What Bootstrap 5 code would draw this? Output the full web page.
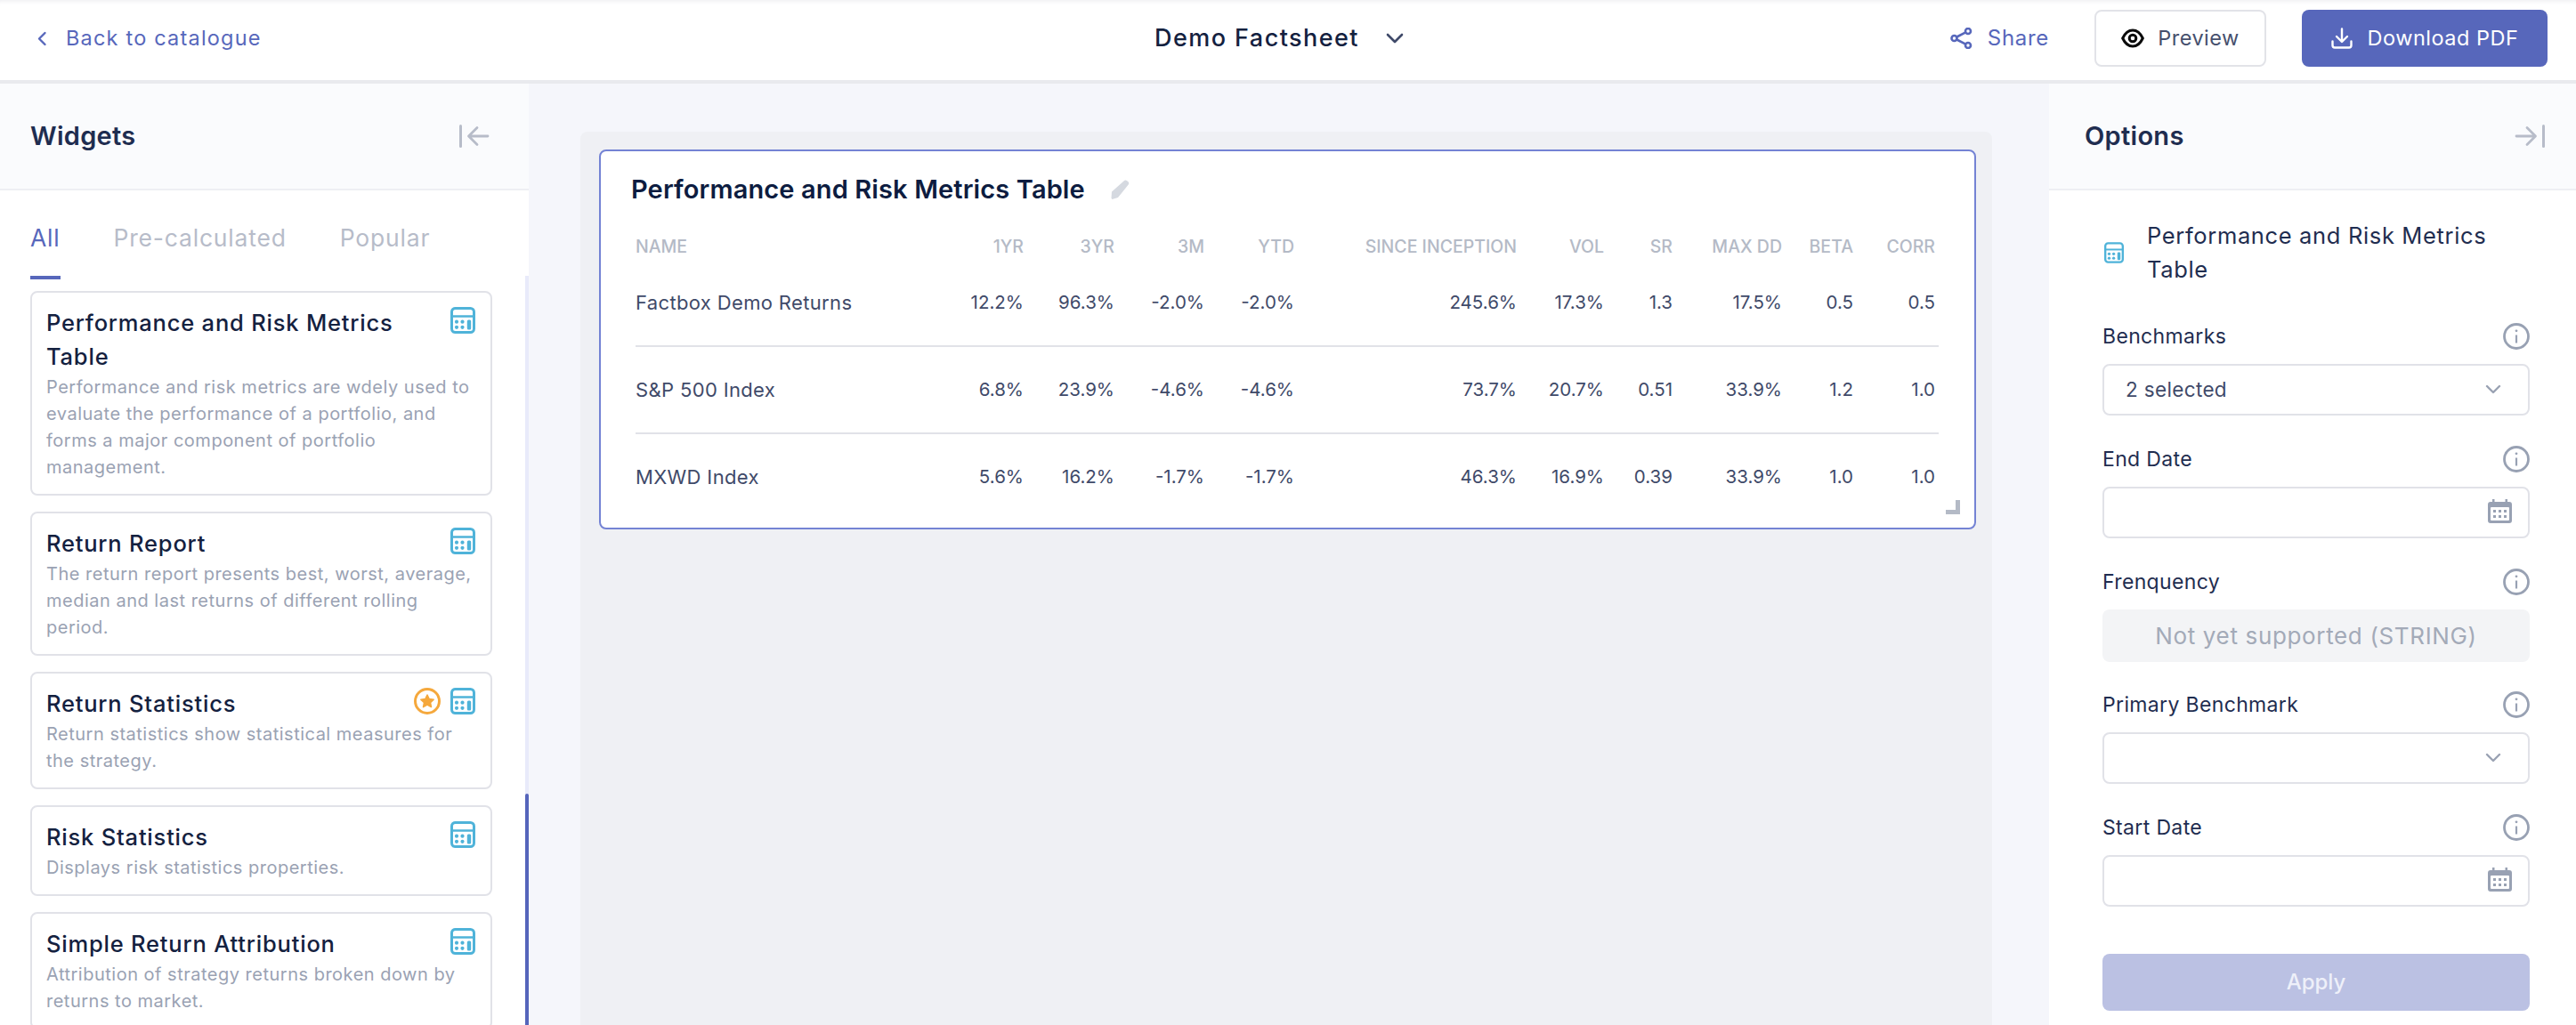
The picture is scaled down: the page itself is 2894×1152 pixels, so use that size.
<!DOCTYPE html>
<html lang="en">
<head>
    <meta charset="UTF-8">
    <meta name="viewport" content="width=device-width, initial-scale=1.0">
    <title>Demo Factsheet</title>
    <link href="https://cdn.jsdelivr.net/npm/bootstrap@5.3.0/dist/css/bootstrap.min.css" rel="stylesheet">
    <style>
        html, body { height: 100%; }
        body {
            font-family: Inter, "Noto Sans", sans-serif;
            background: #f5f6fb;
            color: #1f2d50;
            overflow: hidden;
        }
        .app-shell { height: 100vh; }

        /* top bar */
        .top-bar {
            height: 94px;
            padding: 0 32px 4px 0;
            background: #fff;
            border-bottom: 4px solid #e9eaee;
            box-shadow: inset 0 5px 4px -3px #f0f0f3;
            flex: none;
        }
        .top-left { width: 1297px; padding-left: 41px; }
        .back-link { color: #5767bb; font-size: 23.5px; letter-spacing: 1.2px; text-decoration: none; gap: 21px; }
        .sheet-title { color: #14213f; font-size: 27px; font-weight: 500; letter-spacing: 1.45px; gap: 30px; }
        .share-link { color: #5767bb; font-size: 24px; letter-spacing: .7px; text-decoration: none; gap: 17px; margin-right: 51px; }
        .top-btn {
            height: 64px;
            font-size: 23.5px;
            letter-spacing: .5px;
            border-radius: 8px;
            display: flex;
            align-items: center;
            justify-content: center;
        }
        .btn-preview { width: 193px; margin-right: 40px; background: #fff; border: 2px solid #e2e3e8; color: #46506d; gap: 15px; }
        .btn-download { width: 276px; background: #5767bb; border: 0; color: #fff; gap: 17px; }

        /* side panels */
        .side-left { width: 594px; background: #fff; flex: none; }
        .side-right { width: 592px; background: #fff; flex: none; }
        .panel-head {
            height: 120px;
            background: #fafbfd;
            border-bottom: 2px solid #eeeff3;
            flex: none;
        }
        .side-left .panel-head { padding: 0 44px 0 34px; }
        .side-right .panel-head { padding: 0 35px 0 40px; }
        .panel-title { color: #1f2d50; font-size: 29px; font-weight: 600; letter-spacing: .3px; margin: 0; }

        /* tabs */
        .tab-row { padding: 0 0 0 34px; gap: 60px; height: 100px; flex: none; }
        .tab-row .nav-link {
            padding: 0;
            height: 100px;
            line-height: 106px;
            font-size: 26.5px;
            letter-spacing: .8px;
            color: #b7bcc9;
        }
        .tab-row .nav-link.active { color: #5767bb; border-bottom: 4px solid #5767bb; }
        .widget-list { padding: 13px 41px 0 34px; overflow: hidden; gap: 18px; }
        .widget-item {
            border: 2px solid #e1e2e8;
            border-radius: 8px;
            padding: 15px 16px;
            flex: none;
        }
        .widget-item h3 {
            font-size: 25.5px;
            font-weight: 500;
            line-height: 38px;
            letter-spacing: .8px;
            color: #14213f;
            margin: 0;
        }
        .widget-item p {
            font-size: 20px;
            line-height: 30px;
            letter-spacing: .5px;
            color: #9aa2b3;
            margin: 0;
        }
        .item-icons { position: absolute; top: 16px; right: 17px; gap: 11px; }
        .has-icon h3 { padding-right: 42px; }
        .scroll-track { position: absolute; right: 0; top: 216px; bottom: 0; width: 4px; background: #e8eafa; }
        .scroll-thumb { position: absolute; left: 0; right: 0; top: 582px; bottom: 0; background: #5565bb; border-radius: 2px 2px 0 0; }

        /* canvas */
        .canvas-area { padding: 54px 64px 0 58px; }
        .canvas-sheet { background: #eff0f4; border-radius: 8px 8px 0 0; height: 100%; padding: 20px 18px 0 21px; }
        .metric-box {
            height: 427px;
            padding: 23px 24px 0 34px;
            background: #fff;
            border: 2px solid #7483d4;
            border-radius: 8px;
        }
        .metric-title { color: #0d1c40; font-size: 29px; font-weight: 600; letter-spacing: .12px; line-height: 40px; margin: 0; gap: 28px; }
        .metric-table { table-layout: fixed; width: 1464px; margin: 29px 0 0 5px; }
        .metric-table th, .metric-table td { padding: 0 4px 0 0; text-align: right; vertical-align: middle; border: 0; background: none; white-space: nowrap; }
        .metric-table th:first-child, .metric-table td:first-child { text-align: left; }
        .metric-table thead th { height: 31px; color: #b4bac6; font-size: 19.5px; font-weight: 500; }
        .metric-table tbody td { height: 98px; color: #3f4a69; font-size: 20.5px; }
        .metric-table tbody td:first-child { font-size: 22px; letter-spacing: .35px; }
        .metric-table tbody tr:first-child td { height: 96px; }
        .metric-table tbody tr + tr td { border-top: 2px solid #e1e2e8; }
        .metric-table col:nth-child(1) { width: 340px; }
        .metric-table col:nth-child(2) { width: 100px; }
        .metric-table col:nth-child(3) { width: 102px; }
        .metric-table col:nth-child(4), .metric-table col:nth-child(5) { width: 101px; }
        .metric-table col:nth-child(6) { width: 250px; }
        .metric-table col:nth-child(7) { width: 98px; }
        .metric-table col:nth-child(8) { width: 77px; }
        .metric-table col:nth-child(9) { width: 123px; }
        .metric-table col:nth-child(10) { width: 80px; }
        .metric-table col:nth-child(11) { width: 92px; }
        .resize-grip {
            position: absolute;
            right: 16px;
            bottom: 15px;
            width: 16px;
            height: 16px;
            border-right: 5px solid #b4bac6;
            border-bottom: 5px solid #b4bac6;
        }

        /* options */
        .options-body { padding: 32px 52px 0 60px; }
        .options-title {
            color: #1f2d50;
            font-size: 25.5px;
            font-weight: 400;
            line-height: 38px;
            letter-spacing: .65px;
            gap: 26px;
            margin: 0 0 41px 2px;
            height: 76px;
        }
        .option-field { height: 138px; }
        .option-label { height: 46px; padding-bottom: 16px; color: #1f2d50; font-size: 23px; letter-spacing: .35px; margin: 0; }
        .form-select.opt-input, .form-control.opt-input {
            height: 58px;
            border: 2px solid #e1e2e8;
            border-radius: 8px;
            padding: 0 24px;
            font-size: 22.5px;
            letter-spacing: .35px;
            color: #3f4a69;
            box-shadow: none;
        }
        .form-select.opt-input {
            background-image: url("data:image/svg+xml,%3csvg xmlns='http://www.w3.org/2000/svg' viewBox='0 0 20 20'%3e%3cpath fill='none' stroke='%239aa2b3' stroke-linecap='round' stroke-linejoin='round' stroke-width='2.4' d='M3 6l7 7 7-7'/%3e%3c/svg%3e");
            background-size: 20px 20px;
            background-position: right 29px center;
        }
        .date-icon { position: absolute; right: 20px; top: 14px; }
        .not-supported {
            height: 59px;
            background: #f3f4f6;
            border-radius: 8px;
            color: #a3aab8;
            font-size: 26px;
            letter-spacing: .65px;
        }
        .btn-apply {
            height: 64px;
            margin-top: 19px;
            background: #bbc1e3;
            border: 0;
            border-radius: 8px;
            color: #eef0f9;
            font-size: 24px;
            font-weight: 500;
        }
        .btn-apply:disabled { background: #bbc1e3; color: #eef0f9; opacity: 1; }
    </style>
</head>
<body>
    <svg width="0" height="0" class="position-absolute">
        <symbol id="ic-calc" viewBox="0 0 28 30">
            <rect x="1.5" y="1.5" width="25" height="27" rx="4" fill="none" stroke="#4fb3d9" stroke-width="3"/>
            <path d="M2 10.500h24" stroke="#4fb3d9" stroke-width="2.500"/>
            <g fill="#4fb3d9">
                <circle cx="7" cy="16.700" r="2.100"/><circle cx="13.500" cy="16.700" r="2.100"/>
                <circle cx="7" cy="22.800" r="2.100"/><circle cx="13.500" cy="22.800" r="2.100"/>
                <rect x="18.800" y="14.500" width="4.400" height="11" rx="1.500"/>
            </g>
        </symbol>
        <symbol id="ic-star" viewBox="0 0 30 30">
            <circle cx="15" cy="15" r="13.500" fill="none" stroke="#f5a83c" stroke-width="3"/>
            <path fill="#f5a83c" stroke="#f5a83c" stroke-width="1.500" stroke-linejoin="round" d="M15 8l2.200 4.600 5 .6-3.700 3.400 1 5-4.500-2.500-4.500 2.500 1-5-3.700-3.400 5-.6z"/>
        </symbol>
        <symbol id="ic-info" viewBox="0 0 30 30">
            <circle cx="15" cy="15" r="13.500" fill="none" stroke="#98a1b3" stroke-width="2.800"/>
            <path d="M15 13.500v9" stroke="#98a1b3" stroke-width="2.200"/>
            <circle cx="15" cy="8.800" r="1.400" fill="#98a1b3"/>
        </symbol>
        <symbol id="ic-cal" viewBox="0 0 27 27">
            <path fill="#98a1b3" d="M5 0h2.500v3h12V0H22v3h2a3 3 0 0 1 3 3v18a3 3 0 0 1-3 3H3a3 3 0 0 1-3-3V6a3 3 0 0 1 3-3h2z"/>
            <rect x="3" y="9" width="21" height="15" rx="1" fill="#fff"/>
            <g fill="#98a1b3">
                <rect x="6" y="12" width="3" height="3"/><rect x="12" y="12" width="3" height="3"/><rect x="18" y="12" width="3" height="3"/>
                <rect x="6" y="18" width="3" height="3"/><rect x="12" y="18" width="3" height="3"/><rect x="18" y="18" width="3" height="3"/>
            </g>
        </symbol>
    </svg>

    <div class="app-shell d-flex flex-column">
        <nav class="top-bar d-flex align-items-center">
            <div class="top-left">
                <a href="#" class="back-link d-inline-flex align-items-center">
                    <svg width="12" height="17" viewBox="0 0 12 17"><path d="M9.500 2L3 8.500 9.500 15" fill="none" stroke="#5767bb" stroke-width="2.400" stroke-linecap="round" stroke-linejoin="round"/></svg>
                    Back to catalogue
                </a>
            </div>
            <div class="sheet-title d-flex align-items-center">
                Demo Factsheet
                <svg width="20" height="12" viewBox="0 0 20 12"><path d="M2 2l8 8 8-8" fill="none" stroke="#3f4a69" stroke-width="2.600" stroke-linecap="round" stroke-linejoin="round"/></svg>
            </div>
            <div class="ms-auto d-flex align-items-center">
                <a href="#" class="share-link d-flex align-items-center">
                    <svg width="25" height="24" viewBox="0 0 25 24" fill="none" stroke="#5767bb" stroke-width="2.600"><circle cx="4.500" cy="12" r="3"/><circle cx="20" cy="4" r="3"/><circle cx="20" cy="20" r="3"/><path d="M7.300 10.500l10-5.200M7.300 13.500l10 5.200"/></svg>
                    Share
                </a>
                <button class="btn top-btn btn-preview">
                    <svg width="26" height="22" viewBox="0 0 26 22" fill="none" stroke="#0a0a0a" stroke-width="3"><path d="M1.700 11C4.500 5 8.500 2 13 2s8.500 3 11.300 9C21.500 17 17.500 20 13 20S4.500 17 1.700 11z"/><circle cx="13" cy="11" r="3.800"/></svg>
                    Preview
                </button>
                <button class="btn top-btn btn-download">
                    <svg width="24" height="24" viewBox="0 0 24 24" fill="none" stroke="#fff" stroke-width="2.400" stroke-linecap="round" stroke-linejoin="round"><path d="M12 1.500v14M6 10l6 6 6-6M1.500 15.500v4.500a2.500 2.500 0 0 0 2.500 2.500h16a2.500 2.500 0 0 0 2.500-2.500v-4.500"/></svg>
                    Download PDF
                </button>
            </div>
        </nav>

        <div class="d-flex flex-grow-1 overflow-hidden">
            <aside class="side-left d-flex flex-column position-relative">
                <div class="panel-head d-flex align-items-center justify-content-between">
                    <h2 class="panel-title">Widgets</h2>
                    <svg width="34" height="26" viewBox="0 0 34 26" fill="none" stroke="#b7bcc9" stroke-linecap="round" stroke-linejoin="round"><path stroke-width="3" d="M1.500 1.500v23"/><path stroke-width="2.800" d="M32 13H11M20 3.500L10.500 13l9.500 9.500"/></svg>
                </div>
                <ul class="nav tab-row">
                    <li class="nav-item"><a class="nav-link active" href="#">All</a></li>
                    <li class="nav-item"><a class="nav-link" href="#">Pre-calculated</a></li>
                    <li class="nav-item"><a class="nav-link" href="#">Popular</a></li>
                </ul>
                <div class="widget-list d-flex flex-column flex-grow-1">
                    <div class="widget-item has-icon position-relative">
                        <h3>Performance and Risk Metrics Table</h3>
                        <p>Performance and risk metrics are wdely used to evaluate the performance of a portfolio, and forms a major component of portfolio management.</p>
                        <div class="item-icons d-flex"><svg width="28" height="30"><use href="#ic-calc"/></svg></div>
                    </div>
                    <div class="widget-item has-icon position-relative">
                        <h3>Return Report</h3>
                        <p>The return report presents best, worst, average, median and last returns of different rolling period.</p>
                        <div class="item-icons d-flex"><svg width="28" height="30"><use href="#ic-calc"/></svg></div>
                    </div>
                    <div class="widget-item has-icon position-relative">
                        <h3>Return Statistics</h3>
                        <p>Return statistics show statistical measures for the strategy.</p>
                        <div class="item-icons d-flex"><svg width="30" height="30"><use href="#ic-star"/></svg><svg width="28" height="30"><use href="#ic-calc"/></svg></div>
                    </div>
                    <div class="widget-item has-icon position-relative">
                        <h3>Risk Statistics</h3>
                        <p>Displays risk statistics properties.</p>
                        <div class="item-icons d-flex"><svg width="28" height="30"><use href="#ic-calc"/></svg></div>
                    </div>
                    <div class="widget-item has-icon position-relative">
                        <h3>Simple Return Attribution</h3>
                        <p>Attribution of strategy returns broken down by returns to market.</p>
                        <div class="item-icons d-flex"><svg width="28" height="30"><use href="#ic-calc"/></svg></div>
                    </div>
                </div>
                <div class="scroll-track"><div class="scroll-thumb"></div></div>
            </aside>

            <main class="canvas-area flex-grow-1 overflow-hidden">
                <div class="canvas-sheet">
                    <div class="metric-box position-relative">
                        <h2 class="metric-title d-flex align-items-center">
                            Performance and Risk Metrics Table
                            <svg width="22" height="22" viewBox="0 0 22 22"><path fill="#d5d9e0" d="M15.500 1.500a2.600 2.600 0 0 1 3.700-.2l1 .8a2.600 2.600 0 0 1 .3 3.700L9 20l-6.500 2-1-1.200L2 13.500z"/></svg>
                        </h2>
                        <table class="table metric-table mb-0">
                            <colgroup><col><col><col><col><col><col><col><col><col><col><col></colgroup>
                            <thead>
                                <tr><th>NAME</th><th>1YR</th><th>3YR</th><th>3M</th><th>YTD</th><th>SINCE INCEPTION</th><th>VOL</th><th>SR</th><th>MAX DD</th><th>BETA</th><th>CORR</th></tr>
                            </thead>
                            <tbody>
                                <tr><td>Factbox Demo Returns</td><td>12.2%</td><td>96.3%</td><td>-2.0%</td><td>-2.0%</td><td>245.6%</td><td>17.3%</td><td>1.3</td><td>17.5%</td><td>0.5</td><td>0.5</td></tr>
                                <tr><td>S&amp;P 500 Index</td><td>6.8%</td><td>23.9%</td><td>-4.6%</td><td>-4.6%</td><td>73.7%</td><td>20.7%</td><td>0.51</td><td>33.9%</td><td>1.2</td><td>1.0</td></tr>
                                <tr><td>MXWD Index</td><td>5.6%</td><td>16.2%</td><td>-1.7%</td><td>-1.7%</td><td>46.3%</td><td>16.9%</td><td>0.39</td><td>33.9%</td><td>1.0</td><td>1.0</td></tr>
                            </tbody>
                        </table>
                        <span class="resize-grip"></span>
                    </div>
                </div>
            </main>

            <aside class="side-right d-flex flex-column">
                <div class="panel-head d-flex align-items-center justify-content-between">
                    <h2 class="panel-title">Options</h2>
                    <svg width="34" height="26" viewBox="0 0 34 26" fill="none" stroke="#b7bcc9" stroke-linecap="round" stroke-linejoin="round"><path stroke-width="3" d="M32.500 1.500v23"/><path stroke-width="2.800" d="M2 13h21M14 3.500l9.500 9.500-9.500 9.500"/></svg>
                </div>
                <div class="options-body flex-grow-1">
                    <div class="options-title d-flex align-items-center">
                        <svg width="22" height="24" class="flex-shrink-0"><use href="#ic-calc"/></svg>
                        <span>Performance and Risk Metrics Table</span>
                    </div>
                    <div class="option-field">
                        <div class="option-label d-flex align-items-center justify-content-between"><span>Benchmarks</span><svg width="30" height="30"><use href="#ic-info"/></svg></div>
                        <select class="form-select opt-input"><option>2 selected</option></select>
                    </div>
                    <div class="option-field">
                        <div class="option-label d-flex align-items-center justify-content-between"><span>End Date</span><svg width="30" height="30"><use href="#ic-info"/></svg></div>
                        <div class="position-relative">
                            <input type="text" class="form-control opt-input">
                            <svg class="date-icon" width="27" height="27"><use href="#ic-cal"/></svg>
                        </div>
                    </div>
                    <div class="option-field">
                        <div class="option-label d-flex align-items-center justify-content-between"><span>Frenquency</span><svg width="30" height="30"><use href="#ic-info"/></svg></div>
                        <div class="not-supported d-flex align-items-center justify-content-center">Not yet supported (STRING)</div>
                    </div>
                    <div class="option-field">
                        <div class="option-label d-flex align-items-center justify-content-between"><span>Primary Benchmark</span><svg width="30" height="30"><use href="#ic-info"/></svg></div>
                        <select class="form-select opt-input"><option></option></select>
                    </div>
                    <div class="option-field">
                        <div class="option-label d-flex align-items-center justify-content-between"><span>Start Date</span><svg width="30" height="30"><use href="#ic-info"/></svg></div>
                        <div class="position-relative">
                            <input type="text" class="form-control opt-input">
                            <svg class="date-icon" width="27" height="27"><use href="#ic-cal"/></svg>
                        </div>
                    </div>
                    <button class="btn btn-apply w-100" disabled>Apply</button>
                </div>
            </aside>
        </div>
    </div>

    <script src="https://cdn.jsdelivr.net/npm/bootstrap@5.3.0/dist/js/bootstrap.bundle.min.js"></script>
</body>
</html>
